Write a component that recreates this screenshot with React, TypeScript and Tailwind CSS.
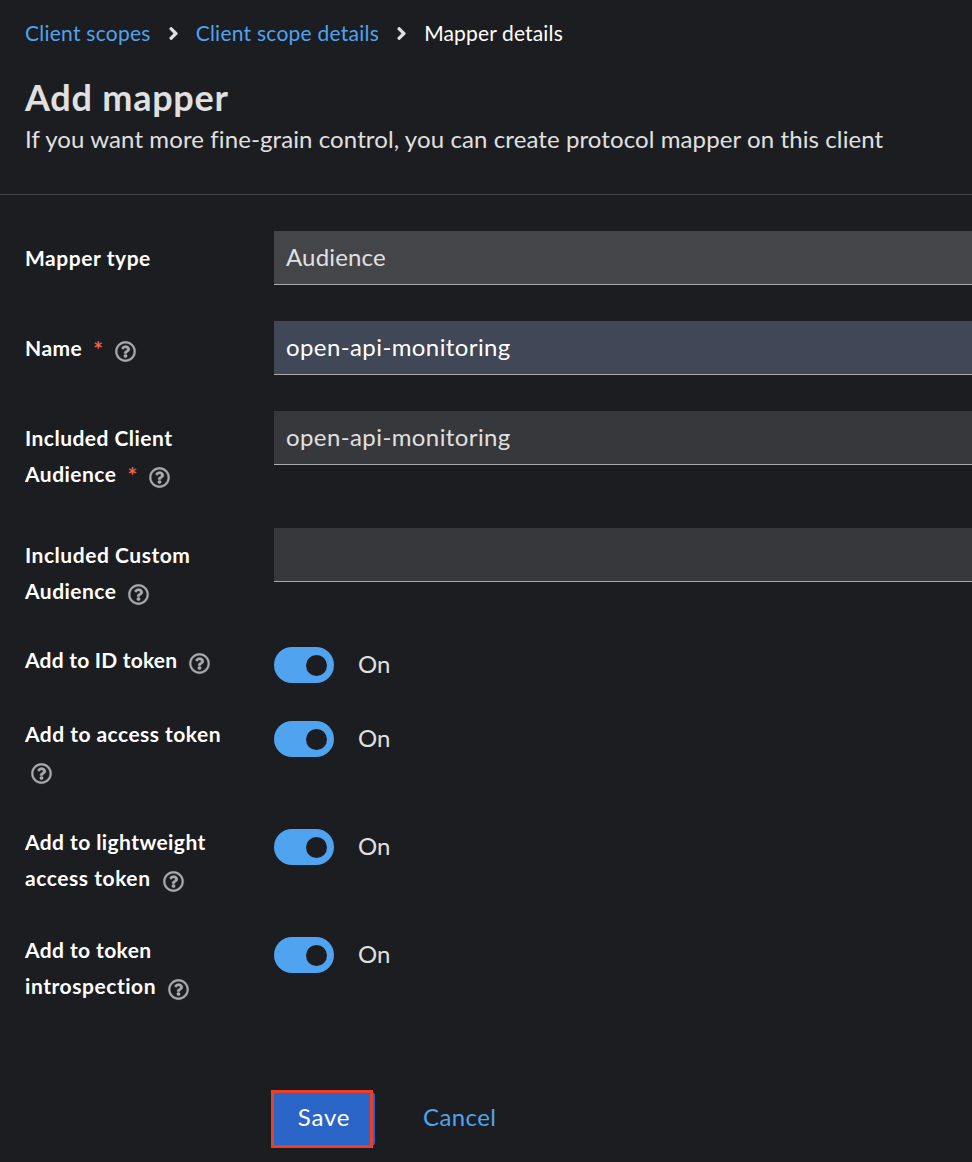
import { Fragment, type ReactNode } from "react";
import { FaAngleRight, FaRegQuestionCircle } from "react-icons/fa";

function Help({ className = "ml-3" }: { className?: string }) {
  return (
    <button type="button" aria-label="Help" className={`${className} inline-block align-[-6px] text-[#a9aaac]`}>
      <FaRegQuestionCircle className="size-[21px] overflow-visible stroke-current [stroke-width:8]" />
    </button>
  );
}

function Required() {
  return <span className="relative top-[2px] ml-[11px] -mr-px text-[23px] font-bold leading-none text-[#f0604d]">*</span>;
}

function Row({ label, className, children }: { label: ReactNode; className: string; children: ReactNode }) {
  return (
    <div className={`flex items-start ${className}`}>
      <div className="w-[249px] shrink-0 whitespace-nowrap text-[21px] font-bold leading-9 tracking-[0.47px] text-white">
        {label}
      </div>
      {children}
    </div>
  );
}

function Field({ value = "", className }: { value?: string; className: string }) {
  return (
    <div className={`-mt-[9px] h-[54px] flex-1 border-b border-[#a9aaac] pl-3 text-2xl leading-[52px] ${className}`}>
      {value}
    </div>
  );
}

function Toggle() {
  return (
    <div className="flex items-start pt-[5px]">
      <button type="button" role="switch" aria-checked="true" className="flex h-9 w-[60px] items-center justify-end rounded-full bg-[#4fa3ef] pr-[7px]">
        <span className="size-[21px] rounded-full bg-[#1c1d20]" />
      </button>
      <span className="ml-6 text-2xl leading-[34px] text-[#e0e0e0]">On</span>
    </div>
  );
}

const crumbs = ["Client scopes", "Client scope details"];

export default function App() {
  return (
    <main className="min-h-[1162px] overflow-hidden bg-[#1c1d20] font-['Lato',sans-serif]">
      <header className="h-[195px] border-b border-[#444548] pl-[25px]">
        <nav className="flex items-center pt-[15px] text-[21px] leading-9 tracking-[0.25px]">
          {crumbs.map((crumb) => (
            <Fragment key={crumb}>
              <a href="#" className="text-[#4fa3ef]">{crumb}</a>
              <FaAngleRight className="mx-[12px] size-[21px] text-[#e0e0e0]" />
            </Fragment>
          ))}
          <span className="tracking-[0.15px] text-white">Mapper details</span>
        </nav>
        <h1 className="mt-[23px] text-4xl font-bold leading-[47px] tracking-[0.75px] text-[#e0e0e0]">Add mapper</h1>
        <p className="whitespace-nowrap text-2xl leading-9 tracking-[0.1px] text-[#e0e0e0]">
          If you want more fine-grain control, you can create protocol mapper on this client
        </p>
      </header>

      <form className="flex flex-col pl-[25px] pt-[45px]">
        <Row className="h-[90px]" label={<span className="tracking-[0.55px]">Mapper type</span>}>
          <Field value="Audience" className="bg-[#444548] tracking-[0.15px] text-[#e0e0e0]" />
        </Row>
        <Row className="h-[90px]" label={<>Name<Required /><Help /></>}>
          <Field value="open-api-monitoring" className="bg-[#404756] tracking-[0.4px] text-white" />
        </Row>
        <Row className="h-[117px]" label={<>Included Client<br />Audience<Required /><Help /></>}>
          <Field value="open-api-monitoring" className="bg-[#37383b] tracking-[0.4px] text-[#e0e0e0]" />
        </Row>
        <Row className="h-[105px]" label={<><span className="tracking-[0.53px]">Included Custom</span><br />Audience<Help /></>}>
          <Field className="bg-[#37383b]" />
        </Row>
        <Row className="h-[74px]" label={<><span className="tracking-[0.22px]">Add to ID token</span><Help /></>}>
          <Toggle />
        </Row>
        <Row className="h-[108px]" label={<>Add to access token<br /><Help className="ml-1.5" /></>}>
          <Toggle />
        </Row>
        <Row className="h-[108px]" label={<><span className="tracking-[0.42px]">Add to lightweight</span><br /><span className="tracking-[0.56px]">access token</span><Help /></>}>
          <Toggle />
        </Row>
        <Row className="h-[158px]" label={<><span className="tracking-[0.4px]">Add to token</span><br /><span className="tracking-[0.55px]">introspection</span><Help /></>}>
          <Toggle />
        </Row>
        <div className="flex items-center pl-[246px] text-2xl leading-9">
          <div className="relative h-[58px] w-[104px]">
            <button type="button" className="ml-[2px] mt-[2px] h-[54px] w-[102px] rounded-[4px] bg-[#2b65c7] pb-[5px] tracking-[0.8px] text-white">
              Save
            </button>
            <span className="pointer-events-none absolute left-0 top-0 h-[58px] w-[102px] border-[3px] border-[#ec3f26]" />
          </div>
          <button type="button" className="-mt-[5px] ml-[48px] tracking-[0.4px] text-[#4fa3ef]">Cancel</button>
        </div>
      </form>
    </main>
  );
}
